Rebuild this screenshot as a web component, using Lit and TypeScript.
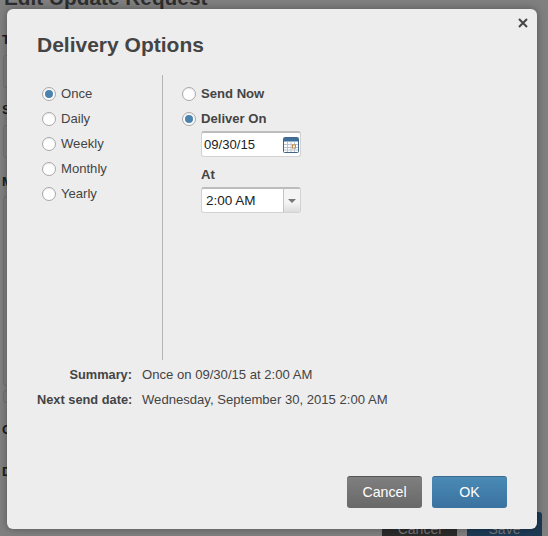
import { LitElement, html, css } from "lit";
import { customElement } from "lit/decorators.js";

const font = css`"Liberation Sans", Arial, sans-serif`;

@customElement("app-root")
export class AppRoot extends LitElement {
  static styles = css`
    :host { display: block; width: 548px; height: 536px; position: relative; overflow: hidden; background: #808080; font-family: ${font}; font-size: 13.1px; color: #444; }
    .bg { position: absolute; inset: 0; overflow: hidden; color: #1c1c1c; font-weight: bold; }
    .bg-title { position: absolute; left: 4px; top: -14px; font-size: 20.800px; color: #2e2e2e; white-space: nowrap; }
    .bg-l { position: absolute; left: 2px; font-size: 13px; line-height: 14px; }
    .bg-box { position: absolute; left: 3px; width: 30px; border: 1px solid #727272; border-radius: 3px; box-sizing: border-box; }
    .bg-btn { position: absolute; top: 512px; height: 30px; width: 75px; text-align: center; line-height: 34px; font-weight: normal; font-size: 14px; color: #777; border-radius: 3px; }
    .bg-c { left: 382px; background: #2b2b2b; }
    .bg-s { left: 467px; background: #1d3a55; }
    .modal { position: absolute; left: 7px; top: 9px; width: 530px; height: 520px; box-sizing: border-box; background: #ededed; border-radius: 6px; box-shadow: 0 0 8px rgba(0,0,0,.35); padding: 26px 30px 0; display: flex; flex-direction: column; }
    .close { position: absolute; left: 511px; top: 9px; width: 10px; height: 10px; }
    h1 { margin: 0; font-size: 21px; line-height: 20px; font-weight: bold; color: #444; }
    .main { display: flex; margin-top: 20px; height: 285px; }
    .left { border-right: 1px solid #b4b4b4; padding: 6px 0 0 5px; width: 120px; display: flex; flex-direction: column; }
    .right { padding: 6px 0 0 19px; display: flex; flex-direction: column; }
    .opt { display: flex; align-items: center; height: 25px; gap: 5px; white-space: nowrap; }
    .b { font-weight: bold; }
    .radio { width: 14px; height: 14px; box-sizing: border-box; border-radius: 50%; background: #fff; border: 1px solid #a8a8a8; box-shadow: inset 0 1px 1px rgba(0,0,0,.08); display: flex; align-items: center; justify-content: center; flex: none; }
    .radio.on::after { content: ""; width: 8px; height: 8px; border-radius: 50%; background: #4a83ae; }
    .sub { margin-left: 19px; display: flex; flex-direction: column; }
    .input { width: 100px; height: 26px; box-sizing: border-box; background: #fff; border: 1px solid #d2d2d2; border-top: 2px solid #bcbcbc; border-radius: 3px; display: flex; align-items: center; color: #222; padding-left: 2px; }
    .input span { flex: 1; }
    .cal { margin-right: 1px; display: block; }
    .at { font-weight: bold; margin: 10px 0 4px; line-height: 16px; }
    .time { font-size: 13.5px; }
    .time span { padding-left: 2px; }
    .drop { width: 16px; height: 100%; border-left: 1px solid #c4c4c4; background: linear-gradient(#f4f4f4 60%, #dcdcdc); display: flex; align-items: center; justify-content: center; }
    .drop::after { content: ""; border: 4px solid transparent; border-top: 4px solid #777; border-bottom: 0; }
    .row { display: flex; height: 25px; align-items: center; white-space: nowrap; }
    .row .k { width: 95px; text-align: right; font-weight: bold; font-size: 12.8px; margin-right: 10px; }
    .summary { margin-top: 2px; }
    .btns { margin-top: auto; margin-bottom: 21px; display: flex; justify-content: flex-end; gap: 10px; }
    .btn { width: 75px; height: 32px; border-radius: 3px; color: #fff; display: flex; align-items: center; justify-content: center; font-size: 14.200px; box-sizing: border-box; border-top: 1px solid #555; padding-bottom: 2px; }
    .cancel { background: linear-gradient(#7f7f7f, #686868); }
    .ok { background: linear-gradient(#4a8ab5, #3a72a0); border-top-color: #3c6a8e; }
  `;
  radio(on: boolean) { return html`<span class="radio ${on ? "on" : ""}"></span>`; }
  render() {
    const opts = ["Once", "Daily", "Weekly", "Monthly", "Yearly"];
    return html`
      <div class="bg">
        <div class="bg-title">Edit Update Request</div>
        <div class="bg-l" style="top:33px">T</div>
        <div class="bg-box" style="top:55px;height:33px"></div>
        <div class="bg-l" style="top:103px">S</div>
        <div class="bg-box" style="top:125px;height:33px"></div>
        <div class="bg-l" style="top:175px">M</div>
        <div class="bg-box" style="top:196px;height:190px"></div>
        <div class="bg-box" style="top:390px;height:13px"></div>
        <div class="bg-l" style="top:423px">C</div>
        <div class="bg-l" style="top:465px">D</div>
        <div class="bg-btn bg-c">Cancel</div>
        <div class="bg-btn bg-s">Save</div>
      </div>
      <div class="modal">
        <svg class="close" viewBox="0 0 10 10"><path d="M1 1l8 8M9 1l-8 8" stroke="#444" stroke-width="2" fill="none"/></svg>
        <h1>Delivery Options</h1>
        <div class="main">
          <div class="left">
            ${opts.map((o, i) => html`<label class="opt">${this.radio(i === 0)}<span>${o}</span></label>`)}
          </div>
          <div class="right">
            <label class="opt b">${this.radio(false)}<span>Send Now</span></label>
            <label class="opt b">${this.radio(true)}<span>Deliver On</span></label>
            <div class="sub">
              <div class="input"><span>09/30/15</span>
                <svg class="cal" width="16" height="16" viewBox="0 0 16 16"><rect x=".5" y=".5" width="15" height="15" rx="1" fill="#fff" stroke="#3f6587"/><rect x="1" y="1" width="14" height="3.500" fill="#3f6f9a"/><path d="M1 7.500h14M1 10.500h14M1 13h14M4.500 5v10M8 5v10M11.500 5v10" stroke="#b9c6d2" stroke-width="1" fill="none"/><rect x="9.500" y="8" width="3" height="3" fill="#fff" stroke="#c8803a"/></svg>
              </div>
              <div class="at">At</div>
              <div class="input time"><span>2:00 AM</span><div class="drop"></div></div>
            </div>
          </div>
        </div>
        <div class="row summary"><div class="k">Summary:</div><div>Once on 09/30/15 at 2:00 AM</div></div>
        <div class="row"><div class="k">Next send date:</div><div>Wednesday, September 30, 2015 2:00 AM</div></div>
        <div class="btns"><div class="btn cancel">Cancel</div><div class="btn ok">OK</div></div>
      </div>`;
  }
}
